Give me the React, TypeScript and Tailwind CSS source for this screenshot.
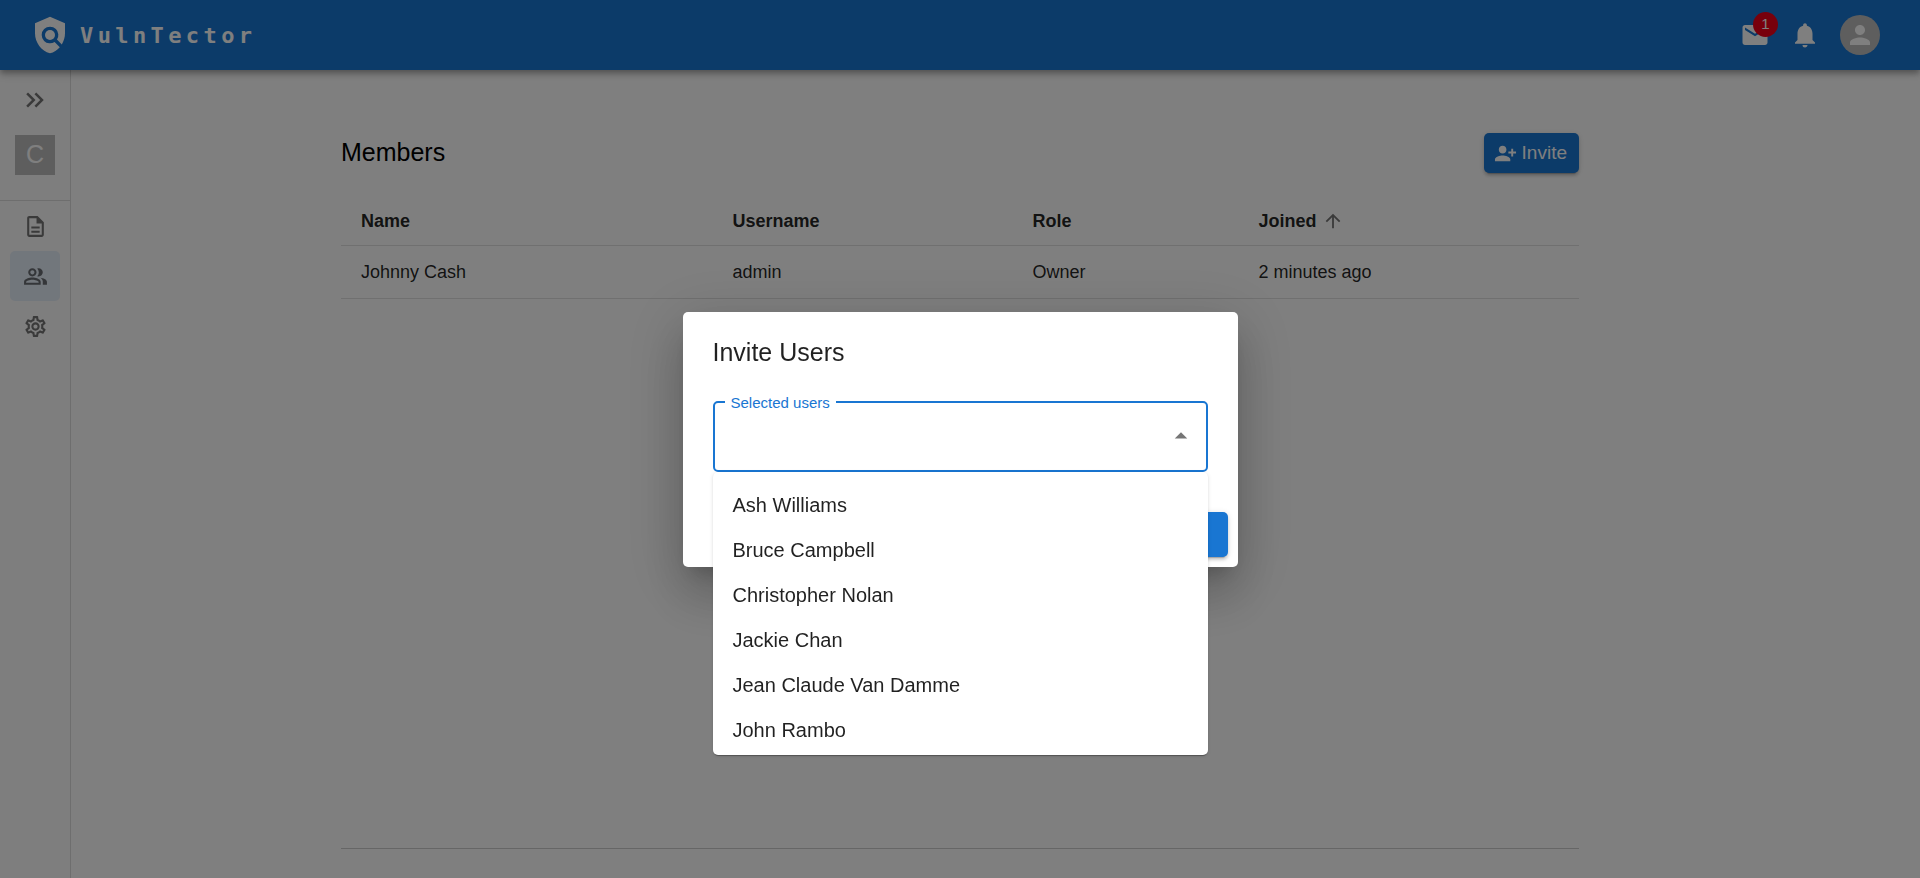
import React, { useState } from "react";
import {
  MdArrowDropUp,
  MdArrowUpward,
  MdKeyboardDoubleArrowRight,
  MdMail,
  MdNotifications,
  MdOutlineDescription,
  MdOutlinePeopleAlt,
  MdOutlineSettings,
  MdPerson,
  MdPersonAddAlt1,
  MdPolicy,
} from "react-icons/md";

const members = [
  { name: "Johnny Cash", username: "admin", role: "Owner", joined: "2 minutes ago" },
];

const users = [
  "Ash Williams",
  "Bruce Campbell",
  "Christopher Nolan",
  "Jackie Chan",
  "Jean Claude Van Damme",
  "John Rambo",
];

function Header() {
  return (
    <header className="relative z-10 flex h-[70px] shrink-0 items-center justify-between bg-[#1976d2] pr-10 pl-[30px] text-white shadow-[0_3px_5px_-1px_rgba(0,0,0,0.2),0_5px_6px_0_rgba(0,0,0,0.14),0_1px_13px_0_rgba(0,0,0,0.12)]">
      <a href="#" className="flex items-center gap-2.5">
        <MdPolicy size={40} />
        <span className="font-['DejaVu_Sans_Mono',monospace] text-[22px] font-bold tracking-[0.2em]">
          VulnTector
        </span>
      </a>
      <div className="flex items-center gap-5">
        <button type="button" aria-label="Messages" className="relative">
          <MdMail size={30} />
          <span className="absolute -top-2 -right-2 flex size-[25px] items-center justify-center rounded-full bg-[#f00018] text-[15px]">
            1
          </span>
        </button>
        <button type="button" aria-label="Notifications">
          <MdNotifications size={30} />
        </button>
        <button
          type="button"
          aria-label="Account"
          className="flex size-10 items-center justify-center rounded-full bg-[#bdbdbd]"
        >
          <MdPerson size={30} />
        </button>
      </div>
    </header>
  );
}

function Sidebar() {
  return (
    <aside className="flex w-[71px] shrink-0 flex-col border-r border-black/12 bg-[#fcfcfc] text-black/54">
      <div className="flex flex-col items-center border-b border-black/12 pb-[25px]">
        <button type="button" aria-label="Expand sidebar" className="flex h-[65px] items-center pb-[5px]">
          <MdKeyboardDoubleArrowRight size={30} />
        </button>
        <span className="flex size-10 items-center justify-center bg-[#bdbdbd] text-[25px] text-white">
          C
        </span>
      </div>
      <nav className="flex flex-col px-2.5">
        <a href="#documents" aria-label="Documents" className="flex h-[50px] items-center justify-center rounded-[5px]">
          <MdOutlineDescription size={25} />
        </a>
        <a
          href="#members"
          aria-label="Members"
          aria-current="page"
          className="flex h-[50px] items-center justify-center rounded-[5px] bg-[#e5eef8]"
        >
          <MdOutlinePeopleAlt size={25} />
        </a>
        <a href="#settings" aria-label="Settings" className="flex h-[50px] items-center justify-center rounded-[5px]">
          <MdOutlineSettings size={25} />
        </a>
      </nav>
    </aside>
  );
}

function MembersTable() {
  return (
    <table className="w-full table-fixed text-left text-lg text-black/87">
      <colgroup>
        <col className="w-[30%]" />
        <col className="w-[24.25%]" />
        <col className="w-[18.25%]" />
        <col className="w-[27.5%]" />
      </colgroup>
      <thead>
        <tr className="h-[47px] border-b border-[#e0e0e0]">
          <th className="px-5 font-bold">Name</th>
          <th className="px-5 font-bold">Username</th>
          <th className="px-5 font-bold">Role</th>
          <th className="px-5 font-bold" aria-sort="ascending">
            <button type="button" className="flex items-center gap-[5px]">
              Joined
              <MdArrowUpward size={22} className="text-black/54" />
            </button>
          </th>
        </tr>
      </thead>
      <tbody>
        {members.map((m) => (
          <tr key={m.username} className="h-[53px] border-b border-[#e0e0e0]">
            <td className="px-5">{m.name}</td>
            <td className="px-5">{m.username}</td>
            <td className="px-5">{m.role}</td>
            <td className="px-5">{m.joined}</td>
          </tr>
        ))}
      </tbody>
    </table>
  );
}

function InviteDialog() {
  const [value, setValue] = useState("");
  return (
    <div className="fixed inset-0 z-20 flex items-center justify-center bg-black/50">
      <div
        role="dialog"
        aria-modal="true"
        aria-labelledby="invite-title"
        className="w-full max-w-[555px] rounded-[5px] bg-white text-black/87 shadow-[0_14px_19px_-9px_rgba(0,0,0,0.2),0_30px_48px_4px_rgba(0,0,0,0.14),0_11px_58px_10px_rgba(0,0,0,0.12)]"
      >
        <h2 id="invite-title" className="px-[30px] py-5 text-[25px] leading-10">
          Invite Users
        </h2>
        <div className="px-[30px] pt-[9px] pb-[30px]">
          <div className="relative flex h-[71px] items-center rounded-[5px] border-2 border-[#1976d2] pr-2.5 pl-4">
            <label
              htmlFor="selected-users"
              className="absolute -top-3 left-2.5 bg-white px-1.5 text-[15px] leading-6 text-[#1976d2]"
            >
              Selected users
            </label>
            <input
              id="selected-users"
              role="combobox"
              aria-expanded="true"
              aria-controls="user-options"
              value={value}
              onChange={(e) => setValue(e.target.value)}
              className="min-w-0 flex-1 text-xl outline-none"
            />
            <button type="button" aria-label="Close" className="text-black/54">
              <MdArrowDropUp size={30} />
            </button>
            <ul
              id="user-options"
              role="listbox"
              className="absolute top-full -right-0.5 -left-0.5 mt-0.5 h-[283px] overflow-hidden rounded-[5px] bg-white pt-[11px] shadow-[0_3px_1px_-2px_rgba(0,0,0,0.2),0_1px_1px_0_rgba(0,0,0,0.14),0_1px_4px_0_rgba(0,0,0,0.12)]"
            >
              {users.map((u) => (
                <li
                  key={u}
                  role="option"
                  aria-selected="false"
                  className="flex h-[45px] items-center px-5 text-xl"
                >
                  {u}
                </li>
              ))}
            </ul>
          </div>
        </div>
        <div className="flex justify-end p-2.5">
          <button
            type="button"
            aria-label="Send invites"
            className="h-[45px] w-24 rounded-[5px] bg-[#1976d2] shadow-[0_4px_1px_-3px_rgba(0,0,0,0.2),0_3px_3px_0_rgba(0,0,0,0.14),0_1px_6px_0_rgba(0,0,0,0.12)]"
          />
        </div>
      </div>
    </div>
  );
}

export default function App() {
  return (
    <div className="flex min-h-screen flex-col bg-white font-['Liberation_Sans',Arial,sans-serif]">
      <Header />
      <div className="flex flex-1">
        <Sidebar />
        <main className="flex flex-1 flex-col pt-[63px] pr-[71px] pb-[29px]">
          <div className="mx-auto flex w-full max-w-[1238px] flex-1 flex-col border-b border-black/20">
            <div className="mb-[25px] flex items-center justify-between">
              <h1 className="text-[25px] text-black">Members</h1>
              <button
                type="button"
                className="flex h-10 items-center gap-[5px] rounded-[5px] bg-[#1976d2] px-3 pl-2.5 text-[19px] text-white shadow-[0_4px_1px_-3px_rgba(0,0,0,0.2),0_3px_3px_0_rgba(0,0,0,0.14),0_1px_6px_0_rgba(0,0,0,0.12)]"
              >
                <MdPersonAddAlt1 size={23} />
                Invite
              </button>
            </div>
            <MembersTable />
          </div>
        </main>
      </div>
      <InviteDialog />
    </div>
  );
}
